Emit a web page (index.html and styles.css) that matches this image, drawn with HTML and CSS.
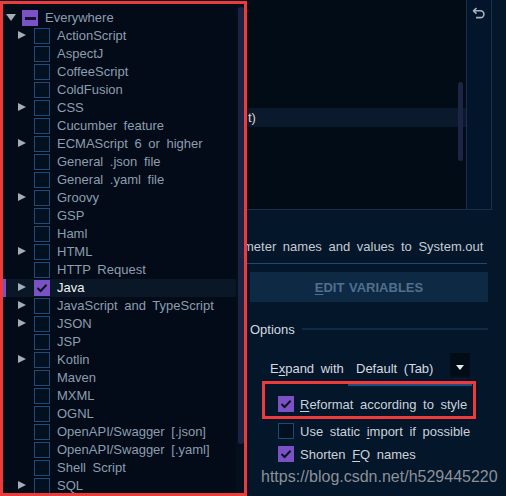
FILE: index.html
```html
<!DOCTYPE html>
<html>
<head>
<meta charset="utf-8">
<link rel="stylesheet" href="styles.css">
</head>
<body>
<div class="main">
  <div class="editor">
    <div class="code">
      <div class="curline"><span class="tok">t)</span></div>
      <div class="vthumb"></div>
    </div>
    <div class="gutter">
      <svg class="undo" width="14" height="14" viewBox="0 0 14 14"><path d="M4.5 2 L1.5 4.8 L4.5 7.6" fill="none" stroke="#a9b1ba" stroke-width="1.6" stroke-linejoin="round"/><path d="M2 4.8 H8.5 A3.4 3.4 0 0 1 8.5 11.6 H4" fill="none" stroke="#a9b1ba" stroke-width="1.6"/></svg>
    </div>
  </div>
  <div class="desc">meter names and values to System.out</div>
  <div class="sep"></div>
  <button class="btn"><u>E</u>DIT VARIABLES</button>
  <div class="group"><span class="gtitle">Options</span><span class="gline"></span></div>
  <div class="expand">
    <span class="lbl">E<u>x</u>pand with</span>
    <div class="combo"><span class="val">Default (Tab)</span><span class="arrowbox"><i class="dn"></i></span></div>
  </div>
  <div class="opt r1"><span class="cb on"><svg width="16" height="16" viewBox="0 0 16 16"><path d="M3.5 8 L6.6 11 L12.6 4.8" fill="none" stroke="#0c1120" stroke-width="2"/></svg></span><span><u>R</u>eformat according to style</span></div>
  <div class="opt r2"><span class="cb"></span><span>Use static <u>i</u>mport if possible</span></div>
  <div class="opt r3"><span class="cb on"><svg width="16" height="16" viewBox="0 0 16 16"><path d="M3.5 8 L6.6 11 L12.6 4.8" fill="none" stroke="#0c1120" stroke-width="2"/></svg></span><span>Shorten <u>F</u>Q names</span></div>
  <div class="wm">https://blog.csdn.net/h529445220</div>
  <div class="mark"></div>
</div>

<div class="popup">
  <div class="tree">
    <div class="row root"><span class="arr"><i class="down"></i></span><span class="cb mixed"><b></b></span><span class="txt">Everywhere</span></div>
    <div class="row"><span class="arr"><i class="right"></i></span><span class="cb"></span><span class="txt">ActionScript</span></div>
    <div class="row"><span class="arr"></span><span class="cb"></span><span class="txt">AspectJ</span></div>
    <div class="row"><span class="arr"></span><span class="cb"></span><span class="txt">CoffeeScript</span></div>
    <div class="row"><span class="arr"></span><span class="cb"></span><span class="txt">ColdFusion</span></div>
    <div class="row"><span class="arr"><i class="right"></i></span><span class="cb"></span><span class="txt">CSS</span></div>
    <div class="row"><span class="arr"></span><span class="cb"></span><span class="txt">Cucumber feature</span></div>
    <div class="row"><span class="arr"><i class="right"></i></span><span class="cb"></span><span class="txt">ECMAScript 6 or higher</span></div>
    <div class="row"><span class="arr"></span><span class="cb"></span><span class="txt">General .json file</span></div>
    <div class="row"><span class="arr"></span><span class="cb"></span><span class="txt">General .yaml file</span></div>
    <div class="row"><span class="arr"><i class="right"></i></span><span class="cb"></span><span class="txt">Groovy</span></div>
    <div class="row"><span class="arr"></span><span class="cb"></span><span class="txt">GSP</span></div>
    <div class="row"><span class="arr"></span><span class="cb"></span><span class="txt">Haml</span></div>
    <div class="row"><span class="arr"><i class="right"></i></span><span class="cb"></span><span class="txt">HTML</span></div>
    <div class="row"><span class="arr"></span><span class="cb"></span><span class="txt">HTTP Request</span></div>
    <div class="row sel"><span class="arr"><i class="right"></i></span><span class="cb on"><svg width="16" height="16" viewBox="0 0 16 16"><path d="M3.5 8 L6.6 11 L12.6 4.8" fill="none" stroke="#0c1120" stroke-width="2"/></svg></span><span class="txt">Java</span></div>
    <div class="row"><span class="arr"><i class="right"></i></span><span class="cb"></span><span class="txt">JavaScript and TypeScript</span></div>
    <div class="row"><span class="arr"><i class="right"></i></span><span class="cb"></span><span class="txt">JSON</span></div>
    <div class="row"><span class="arr"></span><span class="cb"></span><span class="txt">JSP</span></div>
    <div class="row"><span class="arr"><i class="right"></i></span><span class="cb"></span><span class="txt">Kotlin</span></div>
    <div class="row"><span class="arr"></span><span class="cb"></span><span class="txt">Maven</span></div>
    <div class="row"><span class="arr"></span><span class="cb"></span><span class="txt">MXML</span></div>
    <div class="row"><span class="arr"></span><span class="cb"></span><span class="txt">OGNL</span></div>
    <div class="row"><span class="arr"></span><span class="cb"></span><span class="txt">OpenAPI/Swagger [.json]</span></div>
    <div class="row"><span class="arr"></span><span class="cb"></span><span class="txt">OpenAPI/Swagger [.yaml]</span></div>
    <div class="row"><span class="arr"></span><span class="cb"></span><span class="txt">Shell Script</span></div>
    <div class="row"><span class="arr"><i class="right"></i></span><span class="cb"></span><span class="txt">SQL</span></div>
    <div class="row"><span class="arr"></span><span class="cb"></span></div>
  </div>
  <div class="sbar"><div class="sthumb"></div></div>
</div>
</body>
</html>
```

FILE: styles.css
```css
html, body {
  margin: 0;
  padding: 0;
}
body {
  width: 506px;
  height: 496px;
  overflow: hidden;
  background: #041629;
  font-family: "Liberation Sans", Arial, sans-serif;
  font-size: 13px;
  word-spacing: 3px;
  position: relative;
}
u { text-decoration: underline; text-underline-offset: 2px; }

/* ---------- right panel ---------- */
.main {
  margin-left: 240px;
  width: 266px;
  height: 496px;
  position: relative;
}
.editor {
  display: flex;
  width: 251px;
  height: 209px;
  border-bottom: 1px solid #1a3048;
  border-right: 1px solid #1a3048;
}
.code {
  width: 226px;
  background: #020c17;
  padding-top: 108px;
  box-sizing: border-box;
  position: relative;
}
.curline {
  height: 19px;
  background: #0a1a2c;
  padding-left: 8px;
  line-height: 19px;
  color: #d6d6d6;
}
.vthumb {
  position: absolute;
  left: 218px;
  top: 82px;
  width: 5px;
  height: 79px;
  border-radius: 3px;
  background: #1e2445;
}
.gutter {
  flex: 1;
  border-left: 1px solid #1a3048;
  background: #03152a;
  display: flex;
  justify-content: center;
  padding-top: 6px;
  box-sizing: border-box;
}
.undo { display: block; }

.desc {
  margin-top: 29px;
  margin-left: 3px;
  line-height: 16px;
  color: #c3cbd4;
  white-space: nowrap;
}
.sep {
  margin: 8px 0 0 4px;
  width: 243px;
  height: 1px;
  background: #1c4a70;
}
.btn {
  display: block;
  margin: 8px 0 0 10px;
  width: 238px;
  height: 30px;
  border: 0;
  background: #0e2944;
  color: #50708e;
  font-family: "Liberation Sans", Arial, sans-serif;
  font-size: 13px;
  font-weight: bold;
  word-spacing: 1px;
  padding: 0;
}
.group {
  display: flex;
  align-items: center;
  margin: 19px 0 0 10px;
  width: 238px;
  height: 16px;
}
.gtitle { color: #d4dae0; }
.gline {
  flex: 1;
  height: 2px;
  margin-left: 7px;
  background: #102b46;
}
.expand {
  display: flex;
  margin: 16px 0 0 30px;
  height: 33px;
}
.lbl {
  padding-top: 8px;
  line-height: 16px;
  color: #d4dae0;
  width: 78px;
  white-space: nowrap;
}
.combo {
  display: flex;
  width: 124px;
  height: 33px;
  box-sizing: border-box;
  border-bottom: 2px solid #1f4f80;
}
.val {
  flex: 1;
  padding: 8px 0 0 8px;
  line-height: 16px;
  color: #d4dae0;
  white-space: nowrap;
}
.arrowbox {
  width: 20px;
  height: 24px;
  margin-right: 2px;
  background: #020c17;
  display: flex;
  align-items: center;
  justify-content: center;
  padding-top: 4px;
  box-sizing: border-box;
}
.dn {
  width: 0; height: 0;
  border-left: 4px solid transparent;
  border-right: 4px solid transparent;
  border-top: 5px solid #e6e9ee;
}
.opt {
  display: flex;
  align-items: center;
  height: 16px;
  margin-left: 38px;
  color: #cad2da;
  white-space: nowrap;
}
.opt .cb { margin-right: 6px; }
.r1 { margin-top: 10px; }
.r2 { margin-top: 11px; }
.r3 { margin-top: 7px; }
.wm {
  margin: 6px 0 0 21px;
  font-size: 16px;
  line-height: 18px;
  word-spacing: 0;
  color: #8b9199;
  white-space: nowrap;
}
.mark {
  position: absolute;
  left: 22px;
  top: 381px;
  width: 214px;
  height: 38px;
  box-sizing: border-box;
  border: 3px solid #ee3a3a;
}

/* ---------- checkboxes ---------- */
.cb {
  width: 16px;
  height: 16px;
  flex: none;
  box-sizing: border-box;
  border: 1px solid #1d4a78;
  background: #03101f;
  display: flex;
  align-items: center;
  justify-content: center;
}
.cb svg { display: block; margin: -1px; }
.cb.on, .cb.mixed {
  background: #7b52c6;
  border-color: #7b52c6;
}
.cb.mixed b {
  width: 11px;
  height: 3px;
  background: #14122a;
}

/* ---------- popup tree ---------- */
.popup {
  position: absolute;
  left: 0;
  top: 1px;
  width: 247px;
  height: 495px;
  box-sizing: border-box;
  border: 3px solid #ee3a3a;
  background: #020b17;
  display: flex;
  overflow: hidden;
}
.tree {
  flex: 1;
  padding-top: 5px;
  min-width: 0;
}
.row {
  display: flex;
  align-items: center;
  height: 18px;
  padding-left: 15px;
  color: #8d9db0;
  white-space: nowrap;
}
.row.root { padding-left: 3px; }
.row.sel {
  background: #0a1727;
  border-left: 3px solid #7b52c6;
  padding-left: 12px;
  color: #f2f4f6;
}
.arr {
  width: 16px;
  height: 18px;
  flex: none;
  display: flex;
  align-items: center;
}
.down {
  width: 0; height: 0;
  border-left: 5px solid transparent;
  border-right: 5px solid transparent;
  border-top: 7px solid #a4acb5;
  margin-top: -2px;
}
.right {
  width: 0; height: 0;
  border-top: 4px solid transparent;
  border-bottom: 4px solid transparent;
  border-left: 8px solid #a4acb5;
  margin-top: -3px;
}
.row .cb { margin-right: 7px; }
.txt { line-height: 18px; }
.sbar {
  width: 8px;
  flex: none;
  background: #040f1d;
  padding-top: 3px;
  box-sizing: border-box;
}
.sthumb {
  width: 6px;
  margin-left: 2px;
  height: 437px;
  border-radius: 3px;
  background: #1d2242;
}
```
